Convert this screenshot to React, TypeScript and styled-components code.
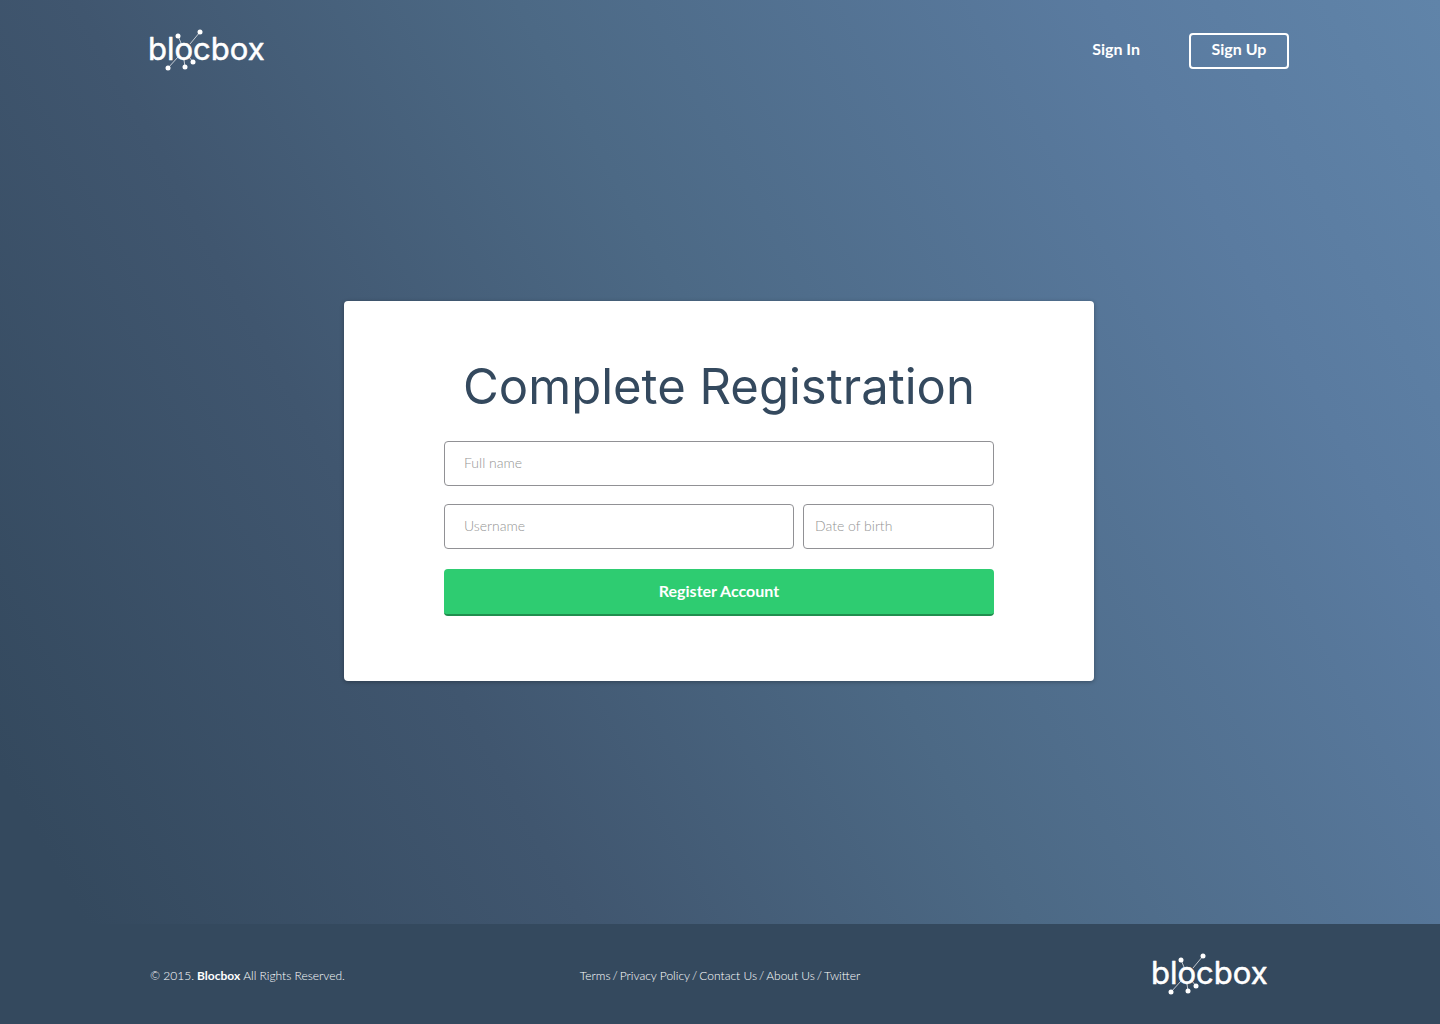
import React from "react";
import styled, { createGlobalStyle } from "styled-components";

const GlobalStyle = createGlobalStyle`
  *, *::before, *::after { box-sizing: border-box; }
  body {
    margin: 0;
    font-family: Lato, "Open Sans", sans-serif;
    color: #fff;
  }
`;

const Page = styled.div`
  min-height: 100vh;
  display: flex;
  flex-direction: column;
  background: linear-gradient(61deg, #34495e 0%, #34495e 7%, #40566f 32%, #4c6985 54%, #5a7ba0 83%, #6084a9 100%);
`;

const Container = styled.div`
  width: 100%;
  max-width: 1180px;
  margin: 0 auto;
  padding: 0 21px 0 19px;
`;

const HeaderBar = styled(Container).attrs({ as: "header" })`
  display: flex;
  align-items: center;
  justify-content: space-between;
  height: 102px;
`;

const Nav = styled.nav`
  display: flex;
  align-items: center;
  gap: 49px;
`;

const NavLink = styled.a<{ $outlined?: boolean }>`
  display: flex;
  align-items: center;
  justify-content: center;
  height: 36px;
  padding-bottom: 4px;
  border-radius: 4px;
  border: ${(p) => (p.$outlined ? "2px solid #fff" : "0")};
  min-width: ${(p) => (p.$outlined ? "100px" : "0")};
  color: #fff;
  font-size: 16px;
  font-weight: 700;
  line-height: 20px;
  text-decoration: none;
`;

const LogoSvg = styled.svg`
  display: block;
  width: 120px;
  height: 44px;
  overflow: visible;
`;

const Wordmark = styled.text`
  font-family: Inter, sans-serif;
  font-size: 31px;
  font-weight: 400;
  fill: #fff;
  stroke: #fff;
  stroke-width: 0.5px;
  stroke-linejoin: round;
`;

const Main = styled.main`
  flex: 1;
  display: flex;
  align-items: center;
  justify-content: center;
  padding: 0 21px 44px 19px;
`;

const Card = styled.section`
  width: 100%;
  max-width: 750px;
  padding: 56px 100px 65px;
  border-radius: 4px;
  background: #fff;
  box-shadow: 0 1px 4px rgba(0, 0, 0, 0.3);
`;

const Title = styled.h1`
  margin: 0 0 24px;
  color: #34495e;
  font-family: Inter, sans-serif;
  font-size: 49px;
  font-weight: 400;
  line-height: 60px;
  text-align: center;
  white-space: nowrap;
`;

const Form = styled.form`
  display: flex;
  flex-direction: column;
`;

const FieldRow = styled.div`
  display: grid;
  grid-template-columns: minmax(0, 11fr) minmax(0, 6fr);
  gap: 9px;
  margin: 18px 0 20px;
`;

const Field = styled.input<{ $compact?: boolean }>`
  width: 100%;
  height: 45px;
  padding: 0 ${(p) => (p.$compact ? "11px" : "19px")} 2px;
  border: 1px solid #919195;
  border-radius: 4px;
  background: #fff;
  color: #34495e;
  font-family: Lato, sans-serif;
  font-size: 14px;
  font-weight: 300;
  outline: none;

  &::placeholder {
    color: #949494;
    opacity: 1;
  }
`;

const SubmitButton = styled.button`
  height: 47px;
  padding: 0 0 2px;
  border: 0;
  border-bottom: 2px solid #208e4e;
  border-radius: 4px;
  background: #2ecc71;
  color: #fff;
  font-family: Lato, sans-serif;
  font-size: 16px;
  font-weight: 700;
  line-height: 20px;
  cursor: pointer;
`;

const FooterBar = styled.footer`
  background: #34495e;
  font-size: 12px;
  font-weight: 300;
  line-height: 16px;
`;

const FooterGrid = styled(Container)`
  display: grid;
  grid-template-columns: 1fr auto 1fr;
  align-items: center;
  height: 100px;
  padding: 0 20px;
`;

const Copyright = styled.p`
  display: flex;
  gap: 3px;
  margin: 0;
  padding-top: 4px;
`;

const Brand = styled.strong`
  font-weight: 700;
`;

const FooterLinks = styled.nav`
  display: flex;
  gap: 2px;
  padding-top: 4px;
`;

const FooterLink = styled.a`
  color: #fff;
  text-decoration: none;
`;

const FooterLogo = styled.div`
  justify-self: end;
  padding: 2px 18px 0 0;
`;

const nodes = [
  { x: 51, y: 3, fromX: 41, fromY: 15 },
  { x: 29, y: 7, fromX: 32, fromY: 14 },
  { x: 19, y: 39, fromX: 29, fromY: 28 },
  { x: 36, y: 38, fromX: 35, fromY: 31 },
  { x: 44, y: 33, fromX: 40, fromY: 28 },
];

function Logo() {
  return (
    <LogoSvg viewBox="0 0 120 44" role="img" aria-label="blocbox">
      <Wordmark x="-1" y="31">blocbox</Wordmark>
      {nodes.map((n) => (
        <g key={`${n.x}-${n.y}`}>
          <line x1={n.fromX} y1={n.fromY} x2={n.x} y2={n.y} stroke="#fff" strokeWidth="0.7" />
          <circle cx={n.x} cy={n.y} r="2.5" fill="#fff" />
        </g>
      ))}
    </LogoSvg>
  );
}

const links = ["Terms", "Privacy Policy", "Contact Us", "About Us", "Twitter"];

export default function App() {
  return (
    <Page>
      <GlobalStyle />
      <HeaderBar>
        <Logo />
        <Nav aria-label="Account">
          <NavLink href="#signin">Sign In</NavLink>
          <NavLink href="#signup" $outlined>Sign Up</NavLink>
        </Nav>
      </HeaderBar>
      <Main>
        <Card>
          <Title>Complete Registration</Title>
          <Form onSubmit={(e) => e.preventDefault()}>
            <Field type="text" placeholder="Full name" aria-label="Full name" />
            <FieldRow>
              <Field type="text" placeholder="Username" aria-label="Username" />
              <Field type="text" placeholder="Date of birth" aria-label="Date of birth" $compact />
            </FieldRow>
            <SubmitButton type="submit">Register Account</SubmitButton>
          </Form>
        </Card>
      </Main>
      <FooterBar>
        <FooterGrid>
          <Copyright>
            <span>© 2015.</span>
            <Brand>Blocbox</Brand>
            <span>All Rights Reserved.</span>
          </Copyright>
          <FooterLinks aria-label="Footer">
            {links.map((label, i) => (
              <React.Fragment key={label}>
                {i > 0 && <span>/</span>}
                <FooterLink href="#">{label}</FooterLink>
              </React.Fragment>
            ))}
          </FooterLinks>
          <FooterLogo>
            <Logo />
          </FooterLogo>
        </FooterGrid>
      </FooterBar>
    </Page>
  );
}
